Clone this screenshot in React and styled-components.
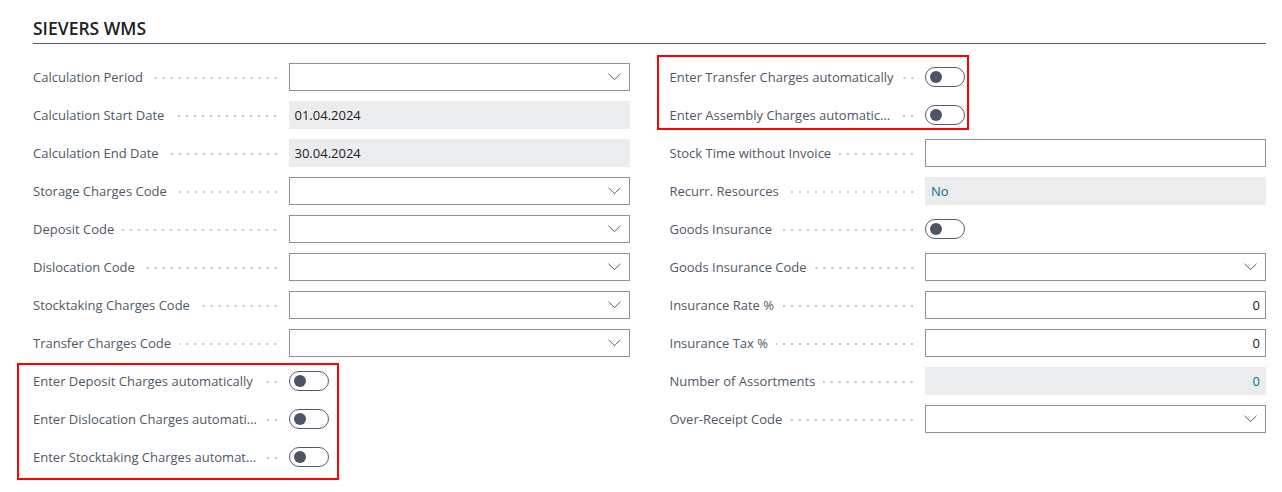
import React from "react";
import styled, { createGlobalStyle } from "styled-components";

const GlobalStyle = createGlobalStyle`
  html, body { margin: 0; padding: 0; background: #ffffff; }
  body { font-family: "Segoe UI", "Open Sans", "Noto Sans", sans-serif; }
`;

const Page = styled.div`
  box-sizing: border-box;
  min-height: 492px;
  padding: 17px 16px 20px 33px;
`;

const Title = styled.h2`
  margin: 0;
  padding-bottom: 4px;
  font-size: 17.5px;
  font-weight: 600;
  color: #212121;
  border-bottom: 1px solid #505c6d;
  line-height: 22px;
`;

const Columns = styled.div`
  display: grid;
  grid-template-columns: 1fr 1fr;
  column-gap: 40px;
  margin-top: 19px;
`;

const Column = styled.div`
  display: flex;
  flex-direction: column;
  gap: 10px;
`;

const Highlight = styled.div`
  position: relative;
  display: flex;
  flex-direction: column;
  gap: 10px;
  &::after {
    content: "";
    box-sizing: border-box;
    position: absolute;
    top: ${(p) => p.$top}px;
    bottom: ${(p) => p.$bottom}px;
    left: ${(p) => p.$left}px;
    width: ${(p) => p.$width}px;
    border: 2px solid #ff0000;
    pointer-events: none;
  }
`;

const Row = styled.div`
  display: grid;
  grid-template-columns: minmax(0, 1fr) 341px;
  height: 28px;
  align-items: center;
`;

const Label = styled.div`
  display: flex;
  align-items: center;
  min-width: 0;
`;

const LabelText = styled.span`
  font-size: 13px;
  color: #4f5866;
  white-space: nowrap;
  overflow: hidden;
  text-overflow: ellipsis;
  min-width: 0;
  max-width: 240px;
`;

const Leader = styled.span`
  flex: 1 0 14px;
  height: 2px;
  margin: 1px 9px 0 8px;
  background-image: radial-gradient(circle, #c4c8cd 0.8px, transparent 1.1px);
  background-size: 8px 2px;
  background-repeat: repeat-x;
  background-position: right center;
`;

const Box = styled.div`
  box-sizing: border-box;
  height: 28px;
  display: flex;
  align-items: center;
  padding: 0 5px;
  font-size: 13px;
  justify-content: ${(p) => (p.$right ? "flex-end" : "space-between")};
  color: ${(p) => (p.$teal ? "#00788a" : "#212121")};
  background: ${(p) => (p.$readonly ? "#ebecee" : "#ffffff")};
  border: 1px solid ${(p) => (p.$readonly ? "#ebecee" : "#8a939d")};
`;

const Chevron = styled.svg`
  margin-left: auto;
  margin-right: 3px;
  flex: none;
`;

const ToggleTrack = styled.div`
  box-sizing: border-box;
  width: 40px;
  height: 20px;
  border: 1px solid #505c6d;
  border-radius: 10px;
  display: flex;
  align-items: center;
  padding-left: 4px;
`;

const Knob = styled.span`
  width: 12px;
  height: 12px;
  border-radius: 50%;
  background: #4c5566;
`;

function Control({ type, value }) {
  if (type === "select")
    return (
      <Box>
        <Chevron width="13" height="8" viewBox="0 0 13 8">
          <path d="M0.5 0.8 L6.5 6.6 L12.5 0.8" fill="none" stroke="#505c6d" strokeWidth="1" />
        </Chevron>
      </Box>
    );
  if (type === "readonly") return <Box $readonly>{value}</Box>;
  if (type === "readonlyTeal") return <Box $readonly $teal $right={value === "0"}>{value}</Box>;
  if (type === "number") return <Box $right>{value}</Box>;
  if (type === "text") return <Box />;
  return (
    <div>
      <ToggleTrack>
        <Knob />
      </ToggleTrack>
    </div>
  );
}

function Field({ label, type, value }) {
  return (
    <Row>
      <Label>
        <LabelText>{label}</LabelText>
        <Leader />
      </Label>
      <Control type={type} value={value} />
    </Row>
  );
}

const leftTop = [
  { label: "Calculation Period", type: "select" },
  { label: "Calculation Start Date", type: "readonly", value: "01.04.2024" },
  { label: "Calculation End Date", type: "readonly", value: "30.04.2024" },
  { label: "Storage Charges Code", type: "select" },
  { label: "Deposit Code", type: "select" },
  { label: "Dislocation Code", type: "select" },
  { label: "Stocktaking Charges Code", type: "select" },
  { label: "Transfer Charges Code", type: "select" },
];

const leftBottom = [
  { label: "Enter Deposit Charges automatically", type: "toggle" },
  { label: "Enter Dislocation Charges automatically", type: "toggle" },
  { label: "Enter Stocktaking Charges automatically", type: "toggle" },
];

const rightTop = [
  { label: "Enter Transfer Charges automatically", type: "toggle" },
  { label: "Enter Assembly Charges automatically", type: "toggle" },
];

const rightRest = [
  { label: "Stock Time without Invoice", type: "text" },
  { label: "Recurr. Resources", type: "readonlyTeal", value: "No" },
  { label: "Goods Insurance", type: "toggle" },
  { label: "Goods Insurance Code", type: "select" },
  { label: "Insurance Rate %", type: "number", value: "0" },
  { label: "Insurance Tax %", type: "number", value: "0" },
  { label: "Number of Assortments", type: "readonlyTeal", value: "0" },
  { label: "Over-Receipt Code", type: "select" },
];

export default function App() {
  return (
    <>
      <GlobalStyle />
      <Page>
        <Title>SIEVERS WMS</Title>
        <Columns>
          <Column>
            {leftTop.map((f) => (
              <Field key={f.label} {...f} />
            ))}
            <Highlight $top={-4} $bottom={-9} $left={-16} $width={322}>
              {leftBottom.map((f) => (
                <Field key={f.label} {...f} />
              ))}
            </Highlight>
          </Column>
          <Column>
            <Highlight $top={-8} $bottom={-1} $left={-13} $width={312}>
              {rightTop.map((f) => (
                <Field key={f.label} {...f} />
              ))}
            </Highlight>
            {rightRest.map((f) => (
              <Field key={f.label} {...f} />
            ))}
          </Column>
        </Columns>
      </Page>
    </>
  );
}
